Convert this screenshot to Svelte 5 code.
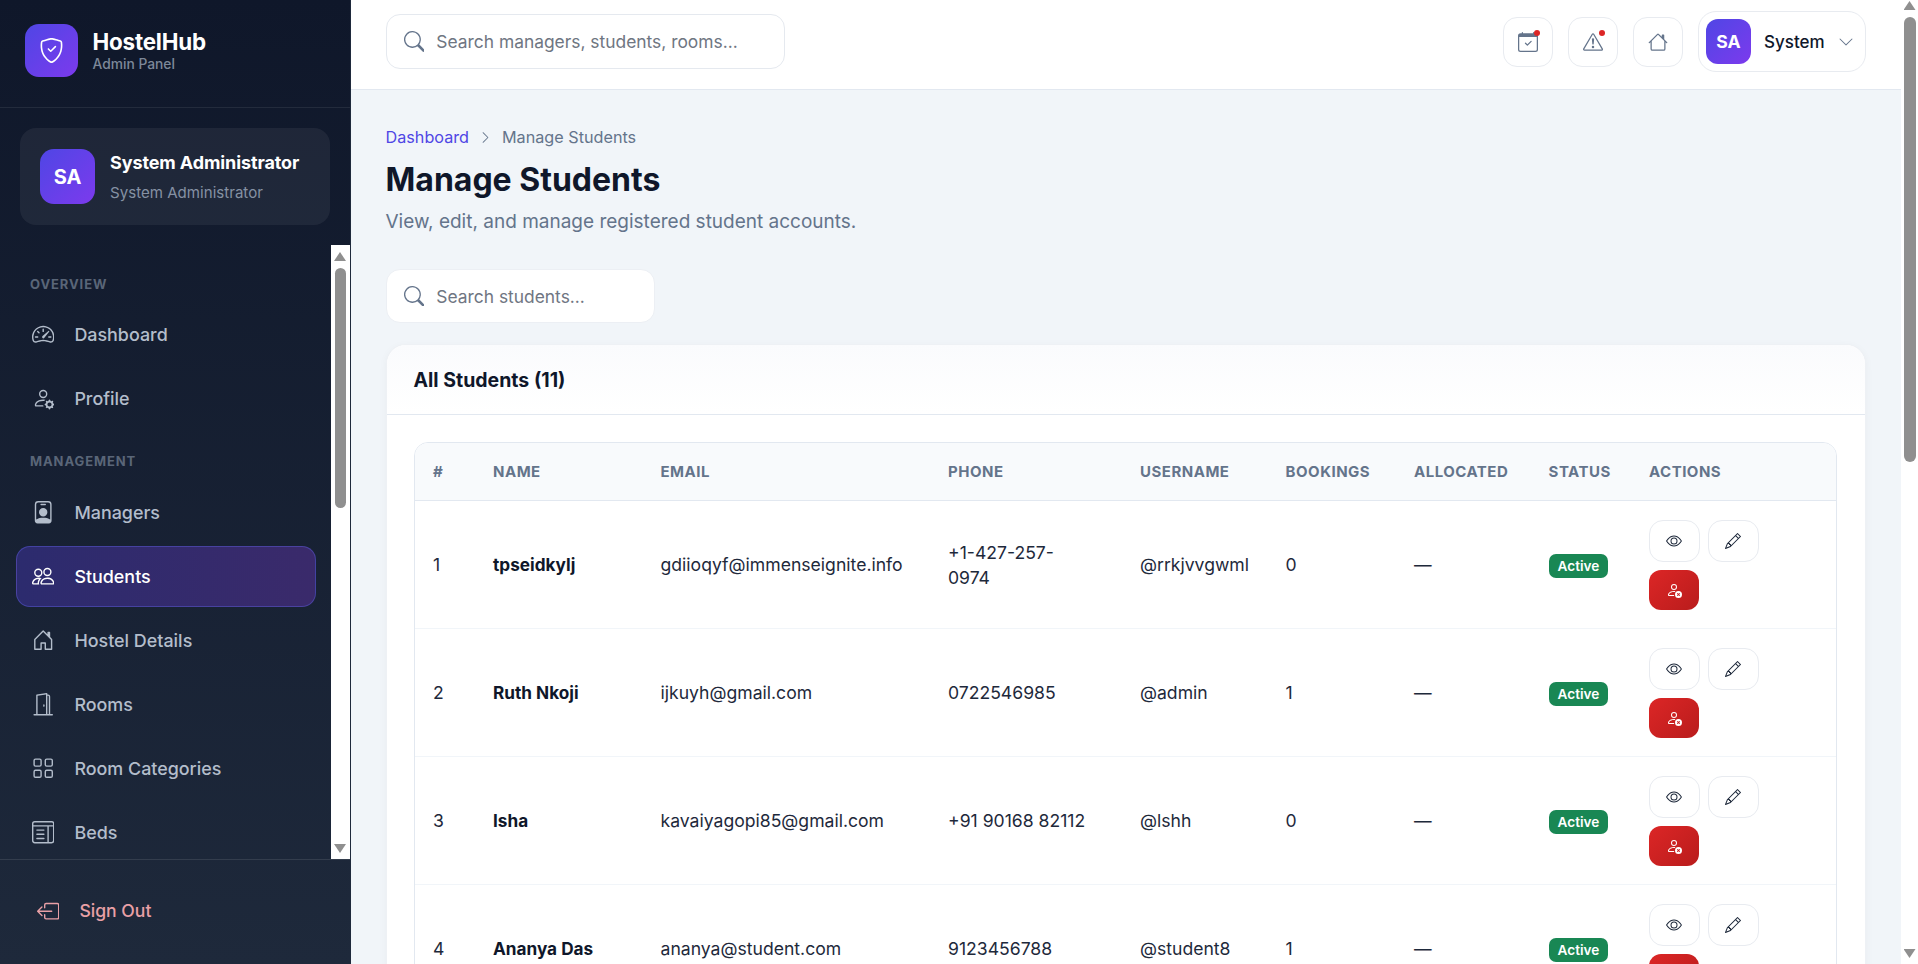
<script>
  const icons = {
    speed: ['M8 4a.5.5 0 0 1 .5.5V6a.5.5 0 0 1-1 0V4.5A.5.5 0 0 1 8 4M3.732 5.732a.5.5 0 0 1 .707 0l.915.914a.5.5 0 1 1-.708.708l-.914-.915a.5.5 0 0 1 0-.707M2 10a.5.5 0 0 1 .5-.5h1.586a.5.5 0 0 1 0 1H2.5A.5.5 0 0 1 2 10m9.5 0a.5.5 0 0 1 .5-.5h1.5a.5.5 0 0 1 0 1H12a.5.5 0 0 1-.5-.5m.754-4.246a.39.39 0 0 0-.527-.02L7.547 9.31a.91.91 0 1 0 1.302 1.258l3.434-4.297a.39.39 0 0 0-.029-.518z', 'M0 10a8 8 0 1 1 15.547 2.661c-.442 1.253-1.845 1.602-2.932 1.25C11.309 13.488 9.475 13 8 13c-1.474 0-3.31.488-4.615.911-1.087.352-2.49.003-2.932-1.25A8 8 0 0 1 0 10m8-7a7 7 0 0 0-6.603 9.329c.203.575.923.876 1.68.63C4.397 12.533 6.358 12 8 12s3.604.532 4.923.96c.757.245 1.477-.056 1.68-.631A7 7 0 0 0 8 3'],
    gear: ['M11 5a3 3 0 1 1-6 0 3 3 0 0 1 6 0M8 7a2 2 0 1 0 0-4 2 2 0 0 0 0 4m.256 7a4.5 4.5 0 0 1-.229-1.004H3c.001-.246.154-.986.832-1.664C4.484 10.68 5.711 10 8 10q.39 0 .74.025c.226-.341.496-.65.804-.918Q8.844 9.002 8 9c-5 0-6 3-6 4s1 1 1 1zm3.63-4.54c.18-.613 1.048-.613 1.229 0l.043.148a.64.64 0 0 0 .921.382l.136-.074c.561-.306 1.175.308.87.869l-.075.136a.64.64 0 0 0 .382.92l.149.045c.612.18.612 1.048 0 1.229l-.15.043a.64.64 0 0 0-.38.921l.074.136c.305.561-.309 1.175-.87.87l-.136-.075a.64.64 0 0 0-.92.382l-.045.149c-.18.612-1.048.612-1.229 0l-.043-.15a.64.64 0 0 0-.921-.38l-.136.074c-.561.305-1.175-.309-.87-.87l.075-.136a.64.64 0 0 0-.382-.92l-.148-.044c-.613-.181-.613-1.049 0-1.23l.148-.043a.64.64 0 0 0 .382-.921l-.074-.136c-.306-.561.308-1.175.869-.87l.136.075a.64.64 0 0 0 .92-.382zM14 12.5a1.5 1.5 0 1 0-3 0 1.5 1.5 0 0 0 3 0'],
    badge: ['M6.5 2a.5.5 0 0 0 0 1h3a.5.5 0 0 0 0-1zM11 8a3 3 0 1 1-6 0 3 3 0 0 1 6 0', 'M4.5 0A2.5 2.5 0 0 0 2 2.5V14a2 2 0 0 0 2 2h8a2 2 0 0 0 2-2V2.5A2.5 2.5 0 0 0 11.5 0zM3 2.5A1.5 1.5 0 0 1 4.5 1h7A1.5 1.5 0 0 1 13 2.5v10.795a4.2 4.2 0 0 0-.776-.492C11.392 12.387 10.063 12 8 12s-3.392.387-4.224.803a4.2 4.2 0 0 0-.776.492z'],
    people: ['M15 14s1 0 1-1-1-4-5-4-5 3-5 4 1 1 1 1zm-7.978-1L7 12.996c.001-.264.167-1.03.76-1.72C8.312 10.629 9.282 10 11 10c1.717 0 2.687.63 3.24 1.276.593.69.758 1.457.76 1.72l-.008.002-.014.002zM11 7a2 2 0 1 0 0-4 2 2 0 0 0 0 4m3-2a3 3 0 1 1-6 0 3 3 0 0 1 6 0M6.936 9.28a6 6 0 0 0-1.23-.247A7 7 0 0 0 5 9c-4 0-5 3-5 4q0 1 1 1h4.216A2.24 2.24 0 0 1 5 13c0-1.01.377-2.042 1.09-2.904.243-.294.526-.569.846-.816M4.92 10A5.5 5.5 0 0 0 4 13H1c0-.26.164-1.03.76-1.724.545-.636 1.492-1.256 3.16-1.275ZM1.5 5.5a3 3 0 1 1 6 0 3 3 0 0 1-6 0m3-2a2 2 0 1 0 0 4 2 2 0 0 0 0-4'],
    houseDoor: ['M8.354 1.146a.5.5 0 0 0-.708 0l-6 6A.5.5 0 0 0 1.5 7.5v7a.5.5 0 0 0 .5.5h4.5a.5.5 0 0 0 .5-.5v-4h2v4a.5.5 0 0 0 .5.5H14a.5.5 0 0 0 .5-.5v-7a.5.5 0 0 0-.146-.354L13 5.793V2.5a.5.5 0 0 0-.5-.5h-1a.5.5 0 0 0-.5.5v1.293zM2.5 14V7.707l5.5-5.5 5.5 5.5V14H10v-4a.5.5 0 0 0-.5-.5h-3a.5.5 0 0 0-.5.5v4z'],
    house: ['M8.707 1.5a1 1 0 0 0-1.414 0L.646 8.146a.5.5 0 0 0 .708.708L2 8.207V13.5A1.5 1.5 0 0 0 3.5 15h9a1.5 1.5 0 0 0 1.5-1.5V8.207l.646.647a.5.5 0 0 0 .708-.708L13 5.793V2.5a.5.5 0 0 0-.5-.5h-1a.5.5 0 0 0-.5.5v1.293zM13 7.207V13.5a.5.5 0 0 1-.5.5h-9a.5.5 0 0 1-.5-.5V7.207l5-5z'],
    door: ['M8.5 10c-.276 0-.5-.448-.5-1s.224-1 .5-1 .5.448.5 1-.224 1-.5 1', 'M10.828.122A.5.5 0 0 1 11 .5V1h.5A1.5 1.5 0 0 1 13 2.5V15h1.5a.5.5 0 0 1 0 1h-13a.5.5 0 0 1 0-1H3V1.5a.5.5 0 0 1 .43-.495l7-1a.5.5 0 0 1 .398.117M11.5 2H11v13h1V2.5a.5.5 0 0 0-.5-.5M4 1.934V15h6V1.077z'],
    grid: ['M1 2.5A1.5 1.5 0 0 1 2.5 1h3A1.5 1.5 0 0 1 7 2.5v3A1.5 1.5 0 0 1 5.5 7h-3A1.5 1.5 0 0 1 1 5.5zM2.5 2a.5.5 0 0 0-.5.5v3a.5.5 0 0 0 .5.5h3a.5.5 0 0 0 .5-.5v-3a.5.5 0 0 0-.5-.5zm6.5.5A1.5 1.5 0 0 1 10.5 1h3A1.5 1.5 0 0 1 15 2.5v3A1.5 1.5 0 0 1 13.5 7h-3A1.5 1.5 0 0 1 9 5.5zm1.5-.5a.5.5 0 0 0-.5.5v3a.5.5 0 0 0 .5.5h3a.5.5 0 0 0 .5-.5v-3a.5.5 0 0 0-.5-.5zM1 10.5A1.5 1.5 0 0 1 2.5 9h3A1.5 1.5 0 0 1 7 10.5v3A1.5 1.5 0 0 1 5.5 15h-3A1.5 1.5 0 0 1 1 13.5zm1.5-.5a.5.5 0 0 0-.5.5v3a.5.5 0 0 0 .5.5h3a.5.5 0 0 0 .5-.5v-3a.5.5 0 0 0-.5-.5zm6.5.5A1.5 1.5 0 0 1 10.5 9h3a1.5 1.5 0 0 1 1.5 1.5v3a1.5 1.5 0 0 1-1.5 1.5h-3A1.5 1.5 0 0 1 9 13.5zm1.5-.5a.5.5 0 0 0-.5.5v3a.5.5 0 0 0 .5.5h3a.5.5 0 0 0 .5-.5v-3a.5.5 0 0 0-.5-.5z'],
    beds: ['M3 6.5a.5.5 0 0 1 .5-.5h5a.5.5 0 0 1 0 1h-5a.5.5 0 0 1-.5-.5m0 3a.5.5 0 0 1 .5-.5h5a.5.5 0 0 1 0 1h-5a.5.5 0 0 1-.5-.5m.5 2.5a.5.5 0 0 0 0 1h5a.5.5 0 0 0 0-1z', 'M2 0a2 2 0 0 0-2 2v12a2 2 0 0 0 2 2h12a2 2 0 0 0 2-2V2a2 2 0 0 0-2-2zm12 1a1 1 0 0 1 1 1v1H1V2a1 1 0 0 1 1-1zm1 3v10a1 1 0 0 1-1 1h-2V4zm-4 0v11H2a1 1 0 0 1-1-1V4z'],
    signout: ['M6 12.5a.5.5 0 0 0 .5.5h8a.5.5 0 0 0 .5-.5v-9a.5.5 0 0 0-.5-.5h-8a.5.5 0 0 0-.5.5v2a.5.5 0 0 1-1 0v-2A1.5 1.5 0 0 1 6.5 2h8A1.5 1.5 0 0 1 16 3.5v9a1.5 1.5 0 0 1-1.5 1.5h-8A1.5 1.5 0 0 1 5 12.5v-2a.5.5 0 0 1 1 0z', 'M.146 8.354a.5.5 0 0 1 0-.708l3-3a.5.5 0 1 1 .708.708L1.707 7.5H10.5a.5.5 0 0 1 0 1H1.707l2.147 2.146a.5.5 0 0 1-.708.708z'],
    shield: ['M5.338 1.59a61 61 0 0 0-2.837.856.48.48 0 0 0-.328.39c-.554 4.157.726 7.19 2.253 9.188a10.7 10.7 0 0 0 2.287 2.233c.346.244.652.42.893.533q.18.085.293.118a1 1 0 0 0 .101.025 1 1 0 0 0 .1-.025q.114-.034.294-.118c.24-.113.547-.29.893-.533a10.7 10.7 0 0 0 2.287-2.233c1.527-1.997 2.807-5.031 2.253-9.188a.48.48 0 0 0-.328-.39c-.651-.213-1.75-.56-2.837-.855C9.552 1.29 8.531 1.067 8 1.067c-.53 0-1.552.223-2.662.524zM5.072.56C6.157.265 7.31 0 8 0s1.843.265 2.928.56c1.11.3 2.229.655 2.887.87a1.54 1.54 0 0 1 1.044 1.262c.596 4.477-.787 7.795-2.465 9.99a11.8 11.8 0 0 1-2.517 2.453 7 7 0 0 1-1.048.625c-.28.132-.581.24-.829.24s-.548-.108-.829-.24a7 7 0 0 1-1.048-.625 11.8 11.8 0 0 1-2.517-2.453C1.928 10.487.545 7.169 1.141 2.692A1.54 1.54 0 0 1 2.185 1.43 63 63 0 0 1 5.072.56', 'M10.854 5.146a.5.5 0 0 1 0 .708l-3 3a.5.5 0 0 1-.708 0l-1.5-1.5a.5.5 0 1 1 .708-.708L7.5 7.793l2.646-2.647a.5.5 0 0 1 .708 0'],
    search: ['M11.742 10.344a6.5 6.5 0 1 0-1.397 1.398h-.001q.044.06.098.115l3.85 3.85a1 1 0 0 0 1.415-1.414l-3.85-3.85a1 1 0 0 0-.115-.1zM12 6.5a5.5 5.5 0 1 1-11 0 5.5 5.5 0 0 1 11 0'],
    calendar: ['M10.854 7.146a.5.5 0 0 1 0 .708l-3 3a.5.5 0 0 1-.708 0l-1.5-1.5a.5.5 0 1 1 .708-.708L7.5 9.793l2.646-2.647a.5.5 0 0 1 .708 0', 'M3.5 0a.5.5 0 0 1 .5.5V1h8V.5a.5.5 0 0 1 1 0V1h1a2 2 0 0 1 2 2v11a2 2 0 0 1-2 2H2a2 2 0 0 1-2-2V3a2 2 0 0 1 2-2h1V.5a.5.5 0 0 1 .5-.5M1 4v10a1 1 0 0 0 1 1h12a1 1 0 0 0 1-1V4z'],
    warn: ['M7.938 2.016A.13.13 0 0 1 8.002 2a.13.13 0 0 1 .063.016.15.15 0 0 1 .054.057l6.857 11.667c.036.06.035.124.002.183a.2.2 0 0 1-.054.06.1.1 0 0 1-.066.017H1.146a.1.1 0 0 1-.066-.017.2.2 0 0 1-.054-.06.18.18 0 0 1 .002-.183L7.884 2.073a.15.15 0 0 1 .054-.057m1.044-.45a1.13 1.13 0 0 0-1.96 0L.165 13.233c-.457.778.091 1.767.98 1.767h13.713c.889 0 1.438-.99.98-1.767z', 'M7.002 12a1 1 0 1 1 2 0 1 1 0 0 1-2 0M7.1 5.995a.905.905 0 1 1 1.8 0l-.35 3.507a.552.552 0 0 1-1.1 0z'],
    chevDown: ['M1.646 4.646a.5.5 0 0 1 .708 0L8 10.293l5.646-5.647a.5.5 0 0 1 .708.708l-6 6a.5.5 0 0 1-.708 0l-6-6a.5.5 0 0 1 0-.708'],
    chevRight: ['M4.646 1.646a.5.5 0 0 1 .708 0l6 6a.5.5 0 0 1 0 .708l-6 6a.5.5 0 0 1-.708-.708L10.293 8 4.646 2.354a.5.5 0 0 1 0-.708'],
    eye: ['M16 8s-3-5.5-8-5.5S0 8 0 8s3 5.5 8 5.5S16 8 16 8M1.173 8a13 13 0 0 1 1.66-2.043C4.12 4.668 5.88 3.5 8 3.5s3.879 1.168 5.168 2.457A13 13 0 0 1 14.828 8q-.086.13-.195.288c-.335.48-.83 1.12-1.465 1.755C11.879 11.332 10.119 12.5 8 12.5s-3.879-1.168-5.168-2.457A13 13 0 0 1 1.172 8z', 'M8 5.5a2.5 2.5 0 1 0 0 5 2.5 2.5 0 0 0 0-5M4.5 8a3.5 3.5 0 1 1 7 0 3.5 3.5 0 0 1-7 0'],
    pencil: ['M12.146.146a.5.5 0 0 1 .708 0l3 3a.5.5 0 0 1 0 .708l-10 10a.5.5 0 0 1-.168.11l-5 2a.5.5 0 0 1-.65-.65l2-5a.5.5 0 0 1 .11-.168zM11.207 2.5 13.5 4.793 14.793 3.5 12.5 1.207zm1.586 3L10.5 3.207 4 9.707V10h.5a.5.5 0 0 1 .5.5v.5h.5a.5.5 0 0 1 .5.5v.5h.293zm-9.761 5.175-.106.106-1.528 3.821 3.821-1.528.106-.106A.5.5 0 0 1 5 12.5V12h-.5a.5.5 0 0 1-.5-.5V11h-.5a.5.5 0 0 1-.468-.325'],
    personX: ['M11 5a3 3 0 1 1-6 0 3 3 0 0 1 6 0M8 7a2 2 0 1 0 0-4 2 2 0 0 0 0 4m.256 7a4.5 4.5 0 0 1-.229-1H3c.001-.246.154-.986.832-1.664C4.484 10.68 5.711 10 8 10q.39 0 .74.025c.226-.341.496-.65.804-.918Q8.844 9.002 8 9c-5 0-6 3-6 4s1 1 1 1z', 'M12.5 16a3.5 3.5 0 1 0 0-7 3.5 3.5 0 0 0 0 7m-.646-4.854.646.647.646-.647a.5.5 0 0 1 .708.708l-.647.646.647.646a.5.5 0 0 1-.708.708l-.646-.647-.646.647a.5.5 0 0 1-.708-.708l.647-.646-.647-.646a.5.5 0 0 1 .708-.708']
  };

  const sections = [
    { title: 'OVERVIEW', items: [
      { label: 'Dashboard', icon: 'speed' },
      { label: 'Profile', icon: 'gear' }
    ]},
    { title: 'MANAGEMENT', items: [
      { label: 'Managers', icon: 'badge' },
      { label: 'Students', icon: 'people', active: true },
      { label: 'Hostel Details', icon: 'houseDoor' },
      { label: 'Rooms', icon: 'door' },
      { label: 'Room Categories', icon: 'grid' },
      { label: 'Beds', icon: 'beds' }
    ]}
  ];

  const columns = [
    { label: '#', width: 60 },
    { label: 'Name', width: 167.5 },
    { label: 'Email', width: 287.5 },
    { label: 'Phone', width: 192 },
    { label: 'Username', width: 145.6 },
    { label: 'Bookings', width: 128.4 },
    { label: 'Allocated', width: 134.6 },
    { label: 'Status', width: 100.4 },
    { label: 'Actions', width: 208 }
  ];

  const students = [
    { n: 1, name: 'tpseidkylj', email: 'gdiioqyf@immenseignite.info', phone: '+1-427-257-0974', user: '@rrkjvvgwml', bookings: 0 },
    { n: 2, name: 'Ruth Nkoji', email: 'ijkuyh@gmail.com', phone: '0722546985', user: '@admin', bookings: 1 },
    { n: 3, name: 'Isha', email: 'kavaiyagopi85@gmail.com', phone: '+91 90168 82112', user: '@lshh', bookings: 0 },
    { n: 4, name: 'Ananya Das', email: 'ananya@student.com', phone: '9123456788', user: '@student8', bookings: 1 }
  ];
</script>

{#snippet icon(name, cls)}
  <svg class={cls} viewBox="0 0 16 16" fill="currentColor" aria-hidden="true">
    {#each icons[name] as d}<path {d} />{/each}
  </svg>
{/snippet}

{#snippet scrollbar(cls)}
  <div class="scrollbar {cls}" aria-hidden="true">
    <i class="arrow up"></i>
    <div class="thumb"></div>
    <i class="arrow down"></i>
  </div>
{/snippet}

<div class="app">
  <aside class="sidebar">
    <div class="brand">
      <div class="logo">{@render icon('shield', 'logo-icon')}</div>
      <div class="brand-text">
        <div class="brand-name">HostelHub</div>
        <div class="brand-sub">Admin Panel</div>
      </div>
    </div>

    <div class="user-card">
      <div class="avatar big">SA</div>
      <div class="user-text">
        <div class="user-name">System Administrator</div>
        <div class="user-role">System Administrator</div>
      </div>
    </div>

    <div class="nav-wrap">
      <nav class="nav">
        {#each sections as section}
          <div class="nav-section">
            <div class="nav-title">{section.title}</div>
            {#each section.items as item}
              <div class="nav-item" class:active={item.active}>
                {@render icon(item.icon, 'nav-icon')}
                <span>{item.label}</span>
              </div>
            {/each}
          </div>
        {/each}
      </nav>
      {@render scrollbar('sb-nav')}
    </div>

    <div class="side-foot">
      <div class="signout">
        {@render icon('signout', 'nav-icon')}
        <span>Sign Out</span>
      </div>
    </div>
  </aside>

  <div class="main">
    <main class="page">
      <header class="topbar">
        <div class="search top-search">
          {@render icon('search', 'search-icon')}
          <span>Search managers, students, rooms...</span>
        </div>
        <div class="top-actions">
          <div class="icon-btn">{@render icon('calendar', 'top-icon')}<i class="dot"></i></div>
          <div class="icon-btn">{@render icon('warn', 'top-icon')}<i class="dot"></i></div>
          <div class="icon-btn">{@render icon('house', 'top-icon')}</div>
          <div class="profile">
            <div class="avatar small">SA</div>
            <span class="profile-name">System</span>
            {@render icon('chevDown', 'chev')}
          </div>
        </div>
      </header>

      <div class="content">
        <div class="crumbs">
          <span class="crumb-link">Dashboard</span>
          {@render icon('chevRight', 'crumb-chev')}
          <span>Manage Students</span>
        </div>
        <h1>Manage Students</h1>
        <p class="sub">View, edit, and manage registered student accounts.</p>

        <div class="search list-search">
          {@render icon('search', 'search-icon')}
          <span>Search students...</span>
        </div>

        <section class="card">
          <div class="card-head">All Students (11)</div>
          <div class="card-body">
            <div class="table-wrap">
              <table>
                <colgroup>
                  {#each columns as c}<col style="width:{c.width}px" />{/each}
                </colgroup>
                <thead>
                  <tr>{#each columns as c}<th>{c.label}</th>{/each}</tr>
                </thead>
                <tbody>
                  {#each students as s}
                    <tr>
                      <td>{s.n}</td>
                      <td class="name">{s.name}</td>
                      <td>{s.email}</td>
                      <td><span class="phone">{s.phone}</span></td>
                      <td>{s.user}</td>
                      <td>{s.bookings}</td>
                      <td>—</td>
                      <td><span class="status">Active</span></td>
                      <td>
                        <div class="actions">
                          <div class="act">{@render icon('eye', 'act-icon')}</div>
                          <div class="act">{@render icon('pencil', 'act-icon')}</div>
                          <div class="act danger">{@render icon('personX', 'act-icon')}</div>
                        </div>
                      </td>
                    </tr>
                  {/each}
                </tbody>
              </table>
            </div>
          </div>
        </section>
      </div>
    </main>
    {@render scrollbar('sb-page')}
  </div>
</div>

<style>
  :global(body) {
    margin: 0;
    overflow: hidden;
    font-family: Inter, "Noto Sans", sans-serif;
    color: #0f172a;
  }

  .app {
    display: flex;
    height: 100vh;
  }

  /* Scrollbars */
  .scrollbar {
    flex: none;
    height: 100%;
    box-sizing: border-box;
    display: flex;
    flex-direction: column;
    align-items: center;
    background: #fff;
  }

  .arrow {
    flex: none;
    display: block;
    width: 12px;
    height: 9px;
    background: #8f8f8f;
  }

  .arrow.up {
    clip-path: polygon(50% 0, 100% 100%, 0 100%);
  }

  .arrow.down {
    clip-path: polygon(0 0, 100% 0, 50% 100%);
  }

  .thumb {
    flex: none;
    background: #8f8f8f;
    border-radius: 6px;
  }

  .sb-nav {
    width: 19px;
    padding: 7px 0 6px;
  }

  .sb-nav .thumb {
    width: 11px;
    height: 240px;
    margin-top: 7px;
    margin-bottom: auto;
  }

  .sb-page {
    width: 17px;
    padding: 1px 0 6px;
  }

  .sb-page .thumb {
    width: 12px;
    height: 445px;
    margin-top: 7px;
    margin-bottom: auto;
  }

  /* Sidebar */
  .sidebar {
    flex: 0 0 350px;
    box-sizing: border-box;
    display: flex;
    flex-direction: column;
    height: 100%;
    border-right: 1px solid #1e293b;
    background: linear-gradient(180deg, #0f172a 0%, #1e293b 100%);
  }

  .brand {
    display: flex;
    align-items: center;
    gap: 14.5px;
    box-sizing: border-box;
    height: 108px;
    flex: none;
    padding: 0 25px 7px;
    border-bottom: 1px solid rgba(255, 255, 255, 0.08);
  }

  .logo {
    width: 53px;
    height: 53px;
    border-radius: 14px;
    display: flex;
    align-items: center;
    justify-content: center;
    color: #fff;
    background: linear-gradient(135deg, #4f46e5, #7c3aed);
  }

  .logo-icon {
    width: 25px;
    height: 25px;
  }

  .brand-name {
    font-size: 22.4px;
    line-height: 26px;
    font-weight: 700;
    color: #fff;
    letter-spacing: -0.2px;
  }

  .brand-sub {
    margin-top: 1px;
    font-size: 13.8px;
    line-height: 16px;
    color: #7d8899;
    font-weight: 500;
  }

  .user-card {
    flex: none;
    margin: 20px 20px;
    height: 97px;
    width: 309.5px;
    box-sizing: border-box;
    padding: 0 20px;
    display: flex;
    align-items: center;
    gap: 15px;
    border-radius: 16px;
    background: rgba(255, 255, 255, 0.06);
  }

  .avatar {
    display: flex;
    align-items: center;
    justify-content: center;
    color: #fff;
    font-weight: 700;
    flex: none;
    background: linear-gradient(135deg, #4f46e5, #7c3aed);
  }

  .avatar.big {
    width: 55px;
    height: 55px;
    border-radius: 14px;
    font-size: 20px;
  }

  .avatar.small {
    width: 45px;
    height: 45px;
    border-radius: 12px;
    font-size: 17.6px;
  }

  .user-text {
    padding-top: 2px;
  }

  .user-name {
    font-size: 18px;
    line-height: 22px;
    font-weight: 700;
    color: #fff;
    white-space: nowrap;
    letter-spacing: -0.1px;
  }

  .user-role {
    font-size: 15.1px;
    line-height: 20px;
    margin-top: 9px;
    color: #8591a3;
    white-space: nowrap;
  }

  .nav-wrap {
    flex: 1;
    min-height: 0;
    display: flex;
  }

  .nav {
    flex: 1;
    min-width: 0;
    overflow: hidden;
    padding: 30px 15px 0 16px;
  }

  .nav-section + .nav-section {
    margin-top: 23px;
  }

  .nav-title {
    height: 18px;
    line-height: 18px;
    margin: 0 0 11.3px 14px;
    font-size: 13px;
    font-weight: 700;
    letter-spacing: 0.9px;
    color: #5a6678;
  }

  .nav-section + .nav-section .nav-title {
    margin-bottom: 12.3px;
  }

  .nav-item {
    box-sizing: border-box;
    height: 60.7px;
    margin-bottom: 3.3px;
    padding-left: 15px;
    display: flex;
    align-items: center;
    gap: 20px;
    border-radius: 14px;
    border: 1px solid transparent;
    font-size: 17.9px;
    font-weight: 500;
    color: #b3bdcb;
  }

  .nav-item.active {
    color: #fff;
    border-color: rgba(99, 102, 241, 0.4);
    background: linear-gradient(90deg, #2c2b6e, #3a2a6b);
  }

  .nav-icon {
    width: 22.4px;
    height: 22.4px;
    flex: none;
  }

  .side-foot {
    flex: none;
    height: 105px;
    box-sizing: border-box;
    padding: 0 20px 2px;
    display: flex;
    align-items: center;
    border-top: 1px solid rgba(255, 255, 255, 0.1);
  }

  .signout {
    display: flex;
    align-items: center;
    gap: 20px;
    padding-left: 17px;
    font-size: 17.6px;
    font-weight: 500;
    color: #e9a0a6;
  }

  /* Main */
  .main {
    flex: 1;
    min-width: 0;
    display: flex;
    height: 100%;
  }

  .page {
    flex: 1;
    min-width: 0;
    overflow: hidden;
    background: #f1f5f9;
  }

  .topbar {
    box-sizing: border-box;
    height: 90px;
    padding: 0 35px 6px;
    display: flex;
    align-items: center;
    justify-content: space-between;
    background: #fff;
    border-bottom: 1px solid #e2e8f0;
  }

  .search {
    box-sizing: border-box;
    display: flex;
    align-items: center;
    gap: 12px;
    padding: 0 17px;
    background: #fff;
    border: 1px solid #e5e9ef;
    border-radius: 14px;
    font-size: 17.4px;
    color: #6f7682;
    white-space: nowrap;
  }

  .search-icon {
    width: 20.8px;
    height: 20.8px;
    color: #64748b;
    flex: none;
  }

  .top-search {
    width: 399px;
    height: 55px;
  }

  .list-search {
    width: 269.5px;
    height: 54px;
    border-color: #eceff4;
    margin-top: 33px;
  }

  .top-actions {
    display: flex;
    align-items: center;
    gap: 15px;
  }

  .icon-btn {
    position: relative;
    box-sizing: border-box;
    width: 50px;
    height: 50px;
    display: flex;
    align-items: center;
    justify-content: center;
    border: 1px solid #e8ebf0;
    border-radius: 14px;
    color: #64748b;
    background: #fff;
  }

  .top-icon {
    width: 20px;
    height: 20px;
  }

  .dot {
    position: absolute;
    top: 12px;
    right: 12px;
    width: 6.5px;
    height: 6.5px;
    border-radius: 50%;
    background: #dc2626;
  }

  .profile {
    box-sizing: border-box;
    width: 168px;
    height: 61px;
    padding: 0 11px 0 7px;
    display: flex;
    align-items: center;
    border: 1px solid #e8ebf0;
    border-radius: 18px;
    background: #fff;
  }

  .profile-name {
    margin-left: 13px;
    font-size: 17px;
    font-weight: 500;
    color: #0f172a;
  }

  .chev {
    width: 16px;
    height: 16px;
    margin-left: auto;
    color: #64748b;
  }

  .content {
    box-sizing: border-box;
    padding: 36px 35px 35px;
  }

  .crumbs {
    display: flex;
    align-items: center;
    gap: 10px;
    height: 22px;
    font-size: 16.2px;
    color: #64748b;
  }

  .crumb-link {
    color: #4f46e5;
  }

  .crumb-chev {
    width: 13px;
    height: 13px;
  }

  h1 {
    margin: 10px 0 0;
    font-size: 32px;
    line-height: 44px;
    font-weight: 700;
    color: #0f172a;
  }

  .sub {
    margin: 6px 0 0;
    font-size: 19px;
    line-height: 28px;
    color: #64748b;
  }

  .card {
    margin-top: 21px;
    background: #fff;
    border: 1px solid #eef1f5;
    border-radius: 20px;
    box-shadow: 0 2px 8px rgba(15, 23, 42, 0.04);
    overflow: hidden;
  }

  .card-head {
    box-sizing: border-box;
    height: 70px;
    padding: 0 27px;
    display: flex;
    align-items: center;
    font-size: 19.5px;
    font-weight: 700;
    color: #0f172a;
    border-bottom: 1px solid #e2e8f0;
    background: linear-gradient(180deg, #fafbfd, #ffffff);
  }

  .card-body {
    padding: 27px 28px 27px 27px;
  }

  .table-wrap {
    border: 1px solid #e2e8f0;
    border-radius: 14px;
    overflow: hidden;
  }

  table {
    width: 100%;
    table-layout: fixed;
    border-collapse: collapse;
  }

  th {
    box-sizing: border-box;
    height: 57px;
    padding: 0 19px 0 18.5px;
    text-align: left;
    font-size: 15px;
    font-weight: 700;
    letter-spacing: 0.5px;
    text-transform: uppercase;
    color: #64748b;
    background: #f8fafc;
    border-bottom: 1px solid #e2e8f0;
  }

  td {
    padding: 19px 19px 18px 18.5px;
    font-size: 17.6px;
    line-height: 25px;
    color: #1e293b;
    border-bottom: 1px solid #f1f5f9;
    vertical-align: middle;
    white-space: nowrap;
  }

  td.name {
    font-size: 17.2px;
    font-weight: 700;
    color: #0f172a;
  }

  .phone {
    display: block;
    max-width: 140px;
    white-space: normal;
  }

  .status {
    display: inline-block;
    padding: 0 9px;
    height: 24px;
    line-height: 24px;
    vertical-align: middle;
    border-radius: 7px;
    font-size: 13.6px;
    font-weight: 600;
    color: #fff;
    background: #198754;
  }

  .actions {
    display: flex;
    flex-wrap: wrap;
    gap: 8px;
    width: 120px;
  }

  .act {
    box-sizing: border-box;
    width: 51px;
    height: 42px;
    display: flex;
    align-items: center;
    justify-content: center;
    border: 1px solid #e8ebf0;
    border-radius: 14px;
    color: #1e293b;
    background: #fff;
  }

  .act.danger {
    width: 50px;
    height: 40px;
    border: 0;
    border-radius: 12px;
    color: #fff;
    background: linear-gradient(135deg, #dc2626, #b91c1c);
  }

  .act-icon {
    width: 16px;
    height: 16px;
  }
</style>
